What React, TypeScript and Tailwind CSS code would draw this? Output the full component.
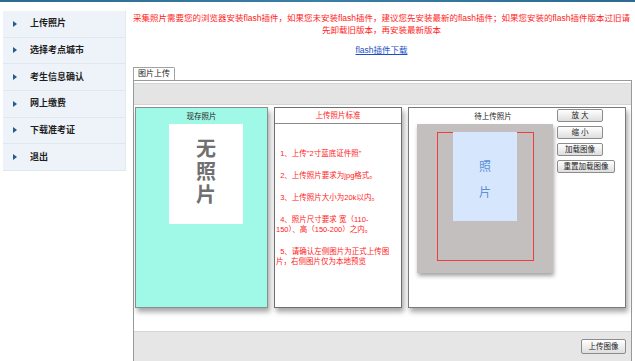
import React from "react";

const menuItems = ["上传照片", "选择考点城市", "考生信息确认", "网上缴费", "下载准考证", "退出"];

const rules: React.ReactNode[] = [
  <>&nbsp;&nbsp;1、上传"2寸蓝底证件照"</>,
  <>&nbsp;&nbsp;2、上传照片要求为jpg格式。</>,
  <>&nbsp;&nbsp;3、上传照片大小为20k以内。</>,
  <>
    &nbsp;&nbsp;4、照片尺寸要求 宽（110-
    <br />
    150）、高（150-200）之内。
  </>,
  <>
    &nbsp;&nbsp;5、请确认左侧图片为正式上传图
    <br />
    片，右侧图片仅为本地预览
  </>,
];

const SmallButton: React.FC<{ label: string; width: string }> = ({ label, width }) => (
  <button
    className={`${width} h-[13px] flex items-center justify-center rounded-[2px] border border-[#8c8c8c] bg-gradient-to-b from-white to-[#dedede] text-[7.5px] leading-none text-[#222] whitespace-nowrap`}
  >
    {label}
  </button>
);

const Sidebar: React.FC = () => (
  <aside className="w-[128px] shrink-0 pl-[3px] pr-[2px] pt-[9px]">
    <ul className="bg-[#edf3f8] border-r border-[#e3ebf1]">
      {menuItems.map((item) => (
        <li
          key={item}
          className="h-[26.67px] flex items-center border-b border-[#e0e8ee] pl-[10px]"
        >
          <span className="w-0 h-0 border-y-[3.5px] border-y-transparent border-l-[4px] border-l-[#255a8a]" />
          <span className="ml-[13px] text-[9px] font-bold text-[#1f1f1f] leading-none">
            {item}
          </span>
        </li>
      ))}
    </ul>
  </aside>
);

export default function App() {
  return (
    <div
      className="w-[635px] h-[361px] bg-white overflow-hidden"
      style={{ fontFamily: '"Liberation Sans", "Noto Sans CJK SC", sans-serif' }}
    >
      <div className="h-[2px] bg-gradient-to-r from-[#2c6a90] via-[#3b7fa6] to-[#2c6a90]" />
      <div className="flex">
        <Sidebar />

        <main className="flex-1 min-w-0 pt-[10px]">
          <p className="text-center text-[8.5px] leading-[12px] text-[#ff1a1a] whitespace-nowrap">
            采集照片需要您的浏览器安装flash插件，如果您未安装flash插件，建议您先安装最新的flash插件；如果您安装的flash插件版本过旧请
            <br />
            先卸载旧版本，再安装最新版本
          </p>
          <div className="mt-[6px] text-center leading-[12px]">
            <a className="text-[8.5px] text-[#1d4fc4] underline">flash插件下载</a>
          </div>

          <div className="mt-[11px] ml-[5px] mr-[3px]">
            {/* tab */}
            <div className="flex">
              <div className="h-[13px] px-[4px] flex items-center border border-b-0 border-[#a2a2a2] bg-white text-[8px] leading-none text-[#222] rounded-tr-[2px]">
                图片上传
              </div>
            </div>

            <div className="border border-[#939b9e] h-[282px] flex flex-col">
              <div className="mt-[2px] h-[22px] bg-[#e4e4e4] border-y border-[#d4d4d4]" />

              <div className="flex gap-[6px] pl-[1px] pt-[2px]">
                {/* current photo */}
                <div className="w-[133px] h-[201px] bg-[#a0f8e6] border border-[#8a8f8e] shadow-[2px_4px_5px_rgba(0,0,0,0.35)]">
                  <div className="pt-[4px] text-center text-[7.5px] leading-[9px] text-[#222]">
                    现存照片
                  </div>
                  <div className="mt-[3px] ml-[33px] w-[74px] h-[100px] bg-white flex flex-col items-center pt-[14px] text-[20px] font-bold leading-[23px] text-[#707070]">
                    <span>无</span>
                    <span>照</span>
                    <span>片</span>
                  </div>
                </div>

                {/* rules */}
                <div className="w-[128px] h-[201px] bg-white border border-[#6f6f6f] shadow-[2px_4px_5px_rgba(0,0,0,0.35)]">
                  <div className="h-[16px] border-b border-[#8a8a8a] flex items-center justify-center text-[7.5px] text-[#ff2020]">
                    上传照片标准
                  </div>
                  <div className="pt-[25px] pl-[1px] text-[7.5px] leading-[10px] text-[#ff2020] whitespace-nowrap">
                    {rules.map((r, i) => (
                      <p key={i} className="mb-[12px]">
                        {r}
                      </p>
                    ))}
                  </div>
                </div>

                {/* pending photo */}
                <div className="w-[218px] h-[201px] bg-white border border-[#7a7a7a] shadow-[2px_4px_5px_rgba(0,0,0,0.35)] flex">
                  <div className="w-[148px] pl-[8px]">
                    <div className="pt-[4px] h-[16px] text-center text-[7.5px] leading-[9px] text-[#222] pl-[12px]">
                      待上传照片
                    </div>
                    <div className="w-[136px] h-[149px] bg-[#c3bfbe] pt-[8px] pl-[20px] shadow-[1px_3px_4px_rgba(0,0,0,0.35)]">
                      <div className="w-[97px] h-[129px] border border-[#f03c3c] pl-[15px]">
                        <div className="-mt-[1px] w-[64px] h-[89px] bg-[#d6e7fd] flex flex-col items-center pt-[22px] text-[12px] leading-[26px] text-[#5c8fd8]">
                          <span>照</span>
                          <span>片</span>
                        </div>
                      </div>
                    </div>
                  </div>
                  <div className="pt-[1px] flex flex-col gap-[4px]">
                    <SmallButton label="放 大" width="w-[46px]" />
                    <SmallButton label="缩 小" width="w-[46px]" />
                    <SmallButton label="加载图像" width="w-[46px]" />
                    <SmallButton label="重置加载图像" width="w-[58px]" />
                  </div>
                </div>
              </div>

              <div className="mt-auto h-[30px] bg-[#e6e6e6] border-t border-[#d6d6d6] flex justify-end pr-[5px] pt-[7px]">
                <button className="w-[45px] h-[15px] flex items-center justify-center rounded-[2px] border border-[#8c8c8c] bg-gradient-to-b from-white to-[#dedede] text-[7.5px] leading-none text-[#222]">
                  上传图像
                </button>
              </div>
            </div>
          </div>
        </main>
      </div>
    </div>
  );
}
